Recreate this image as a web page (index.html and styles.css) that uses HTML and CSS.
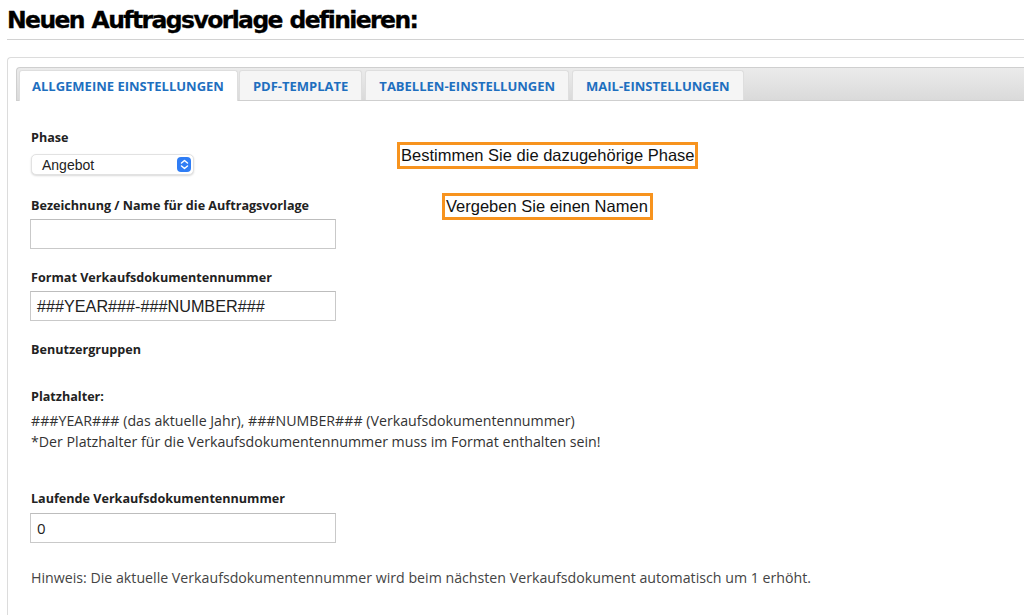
FILE: index.html
```html
<!DOCTYPE html>
<html lang="de">
<head>
<meta charset="utf-8">
<title>Neuen Auftragsvorlage definieren</title>
<link rel="stylesheet" href="styles.css">
</head>
<body>
<div class="page">
  <h1 class="title">Neuen Auftragsvorlage definieren:</h1>
  <div class="rule"></div>
  <div class="panel">
    <div class="tabbar">
      <div class="tab active">ALLGEMEINE EINSTELLUNGEN</div>
      <div class="tab">PDF-TEMPLATE</div>
      <div class="tab">TABELLEN-EINSTELLUNGEN</div>
      <div class="tab">MAIL-EINSTELLUNGEN</div>
    </div>
    <div class="content">
      <div class="field f-phase">
        <div class="label">Phase</div>
        <div class="select">
          <span class="select-text">Angebot</span>
          <span class="stepper">
            <svg width="9" height="11" viewBox="0 0 9 11"><path d="M1.5 4 L4.5 1.5 L7.5 4 M1.5 7 L4.5 9.5 L7.5 7" fill="none" stroke="#fff" stroke-width="1.5" stroke-linecap="round" stroke-linejoin="round"/></svg>
          </span>
        </div>
      </div>
      <div class="field f-name">
        <div class="label">Bezeichnung / Name für die Auftragsvorlage</div>
        <div class="input"></div>
      </div>
      <div class="field f-format">
        <div class="label">Format Verkaufsdokumentennummer</div>
        <div class="input">###YEAR###-###NUMBER###</div>
      </div>
      <div class="field f-groups">
        <div class="label">Benutzergruppen</div>
      </div>
      <div class="field f-hint">
        <div class="label">Platzhalter:</div>
        <p class="text">###YEAR### (das aktuelle Jahr), ###NUMBER### (Verkaufsdokumentennummer)<br>*Der Platzhalter für die Verkaufsdokumentennummer muss im Format enthalten sein!</p>
      </div>
      <div class="field f-counter">
        <div class="label">Laufende Verkaufsdokumentennummer</div>
        <div class="input input-num">0</div>
      </div>
      <p class="note">Hinweis: Die aktuelle Verkaufsdokumentennummer wird beim nächsten Verkaufsdokument automatisch um 1 erhöht.</p>
    </div>
  </div>
  <div class="callout callout-phase">Bestimmen Sie die dazugehörige Phase</div>
  <div class="callout callout-name">Vergeben Sie einen Namen</div>
</div>
</body>
</html>
```
FILE: styles.css
```css
html, body {
  margin: 0;
  padding: 0;
  background: #fff;
}
.page {
  position: relative;
  width: 1024px;
  height: 615px;
  overflow: hidden;
  font-family: "Open Sans", "DejaVu Sans", sans-serif;
  color: #333;
}
.title {
  margin: 0;
  padding: 5px 0 0 7px;
  height: 35px;
  box-sizing: border-box;
  font-family: "DejaVu Sans", Verdana, sans-serif;
  font-weight: bold;
  font-size: 23.5px;
  line-height: 30px;
  letter-spacing: -1.6px;
  word-spacing: 1px;
  color: #000;
  -webkit-text-stroke: 0.3px #000;
}
.rule {
  margin: 4px 0 0 7px;
  height: 1px;
  background: #d2d2d2;
}
.panel {
  margin: 17px 0 0 7px;
  border-top: 1px solid #dcdcdc;
  border-left: 1px solid #dcdcdc;
  border-top-left-radius: 4px;
  padding: 9px 0 0 8px;
  height: 600px;
}
.tabbar {
  display: flex;
  align-items: flex-end;
  gap: 3px;
  height: 34px;
  box-sizing: border-box;
  padding: 2px 0 0 2px;
  border: 1px solid #cfcfcf;
  border-right: none;
  border-top-left-radius: 4px;
  background: linear-gradient(#ebebeb, #dadada);
}
.tab {
  height: 30px;
  box-sizing: border-box;
  padding: 0 13px;
  border: 1px solid #dedede;
  border-bottom: none;
  border-radius: 3px 3px 0 0;
  background: #f5f5f5;
  color: #1e6fbf;
  font-weight: 700;
  font-size: 13px;
  line-height: 30px;
  white-space: nowrap;
}
.tab.active {
  background: #fff;
  height: 31px;
  margin-bottom: -1px;
  margin-right: -2px;
  padding: 0 13px 0 12px;
}
.content {
  padding: 28px 0 0 14px;
}
.field {
  display: flex;
  flex-direction: column;
  align-items: flex-start;
}
.label {
  font-size: 12.6px;
  line-height: 16px;
  padding-top: 1px;
  font-weight: 700;
  color: #222;
  padding-left: 1px;
}
.f-phase .label { margin-bottom: 8px; }
.f-phase { margin-bottom: 22px; }
.f-name .label, .f-format .label { margin-bottom: 5px; }
.f-name { margin-bottom: 20px; }
.f-format { margin-bottom: 20px; }
.f-groups { margin-bottom: 30px; }
.f-hint { margin-bottom: 38px; }
.f-counter .label { margin-bottom: 6px; }
.select {
  position: relative;
  width: 163px;
  height: 21px;
  box-sizing: border-box;
  border: 1px solid #e2e2e2;
  border-radius: 5px;
  background: #fff;
  box-shadow: 0 1px 2px rgba(0,0,0,0.15);
  margin-left: 1px;
  display: flex;
  align-items: center;
  justify-content: space-between;
  padding: 0 2px 0 10px;
}
.select-text {
  font-family: "Liberation Sans", Arial, sans-serif;
  font-size: 14px;
  color: #222;
}
.stepper {
  width: 14px;
  height: 15px;
  border-radius: 4px;
  background: #2f7df5;
  display: flex;
  align-items: center;
  justify-content: center;
}
.input {
  width: 306px;
  height: 30px;
  box-sizing: border-box;
  border: 1px solid #c9c9c9;
  border-top-color: #bdbdbd;
  background: #fff;
  padding: 0 6px;
  font-family: "Liberation Sans", Arial, sans-serif;
  font-size: 16.2px;
  line-height: 28px;
  color: #222;
}
.input-num {
  font-family: "Open Sans", sans-serif;
  font-size: 15px;
  padding-left: 6px;
}
.text {
  margin: 5px 0 0 0;
  font-size: 14.2px;
  line-height: 21px;
  color: #333;
  padding-left: 1px;
}
.note {
  margin: 24px 0 0 0;
  font-size: 14.2px;
  line-height: 21px;
  color: #444;
  padding-left: 1px;
}
.callout {
  position: absolute;
  height: 27px;
  box-sizing: border-box;
  border: 3px solid #f7931e;
  font-family: "Liberation Sans", Arial, sans-serif;
  font-size: 16.5px;
  line-height: 21px;
  color: #111;
  padding: 0 0 0 1px;
  white-space: nowrap;
  background: #fff;
}
.callout-phase {
  left: 397px;
  top: 142px;
  width: 301px;
}
.callout-name {
  left: 442px;
  top: 193px;
  width: 211px;
}
```
